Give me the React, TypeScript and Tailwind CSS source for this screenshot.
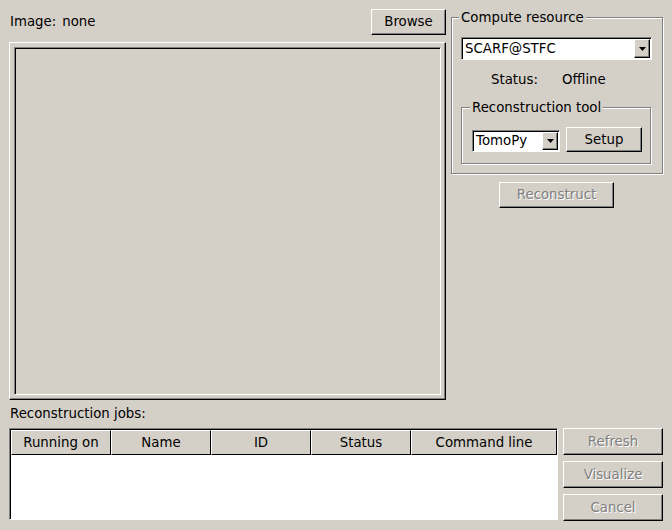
const raised =
  "border border-t-white border-l-white border-r-black border-b-black shadow-[inset_-1px_-1px_0_#808080]";
const sunken =
  "border border-t-[#808080] border-l-[#808080] border-r-white border-b-white shadow-[inset_1px_1px_0_#000]";
const etched = "border border-[#808080] shadow-[inset_1px_1px_0_#fff,1px_1px_0_#fff]";

const Arrow = () => (
  <svg width="7" height="4" viewBox="0 0 7 4">
    <polygon points="0,0 7,0 3.5,4" fill="#000" />
  </svg>
);

const Combo = ({ text, className }: { text: string; className: string }) => (
  <div className={`flex bg-white ${sunken} ${className}`}>
    <span className="flex-1 flex items-center pl-[3px]">{text}</span>
    <div className={`w-[16px] my-[1px] mr-[1px] bg-[#d4d0c8] flex items-center justify-center ${raised}`}>
      <Arrow />
    </div>
  </div>
);

const Button = ({
  label,
  className,
  disabled,
}: {
  label: string;
  className: string;
  disabled?: boolean;
}) => (
  <button
    className={`flex items-center justify-center bg-[#d4d0c8] ${raised} ${className} ${
      disabled ? "text-[#808080] [text-shadow:1px_1px_0_#fff]" : "text-black"
    }`}
  >
    {label}
  </button>
);

const GroupTitle = ({ label, className }: { label: string; className: string }) => (
  <div className={`self-start -mt-[8px] px-[2px] bg-[#d4d0c8] leading-[15px] ${className}`}>{label}</div>
);

export default function App() {
  const columns = [
    { name: "Running on", w: "w-[100px]" },
    { name: "Name", w: "w-[100px]" },
    { name: "ID", w: "w-[100px]" },
    { name: "Status", w: "w-[100px]" },
    { name: "Command line", w: "w-[146px]" },
  ];

  return (
    <div className="w-[672px] h-[530px] bg-[#d4d0c8] text-black font-['DejaVu_Sans',sans-serif] text-[13.33px] leading-[16px] overflow-hidden">
      <div className="flex h-[400px]">
        {/* left: image preview */}
        <div className="ml-[9px] w-[437px] pt-[9px] flex flex-col">
          <div className="flex items-center justify-between h-[26px]">
            <span className="pl-[1px] flex">
              <span>Image:</span>
              <span className="ml-[6px]">none</span>
            </span>
            <Button label="Browse" className="w-[75px] h-[26px]" />
          </div>
          <div className="mt-[7px] h-[358px] p-[4px] border border-t-white border-l-white border-r-black border-b-black shadow-[inset_-1px_-1px_0_#808080]">
            <div className={`h-full ${sunken}`} />
          </div>
        </div>

        {/* right: compute resource */}
        <div className="ml-[5px] w-[212px] pt-[17px] flex flex-col">
          <div className={`h-[157px] flex flex-col pl-[9px] ${etched}`}>
            <GroupTitle label="Compute resource" className="ml-[-2px]" />
            <Combo text="SCARF@STFC" className="mt-[12px] w-[191px] h-[23px]" />
            <div className="mt-[12px] flex h-[16px]">
              <span className="ml-[30px] w-[71px]">Status:</span>
              <span>Offline</span>
            </div>
            <div className={`mt-[19px] w-[190px] h-[57px] flex flex-col pl-[10px] ${etched}`}>
              <GroupTitle label="Reconstruction tool" className="ml-[-2px]" />
              <div className="mt-[12px] flex items-end gap-[6px]">
                <Combo text="TomoPy" className="w-[88px] h-[22px]" />
                <Button label="Setup" className="w-[76px] h-[25px]" />
              </div>
            </div>
          </div>
          <Button label="Reconstruct" disabled className="mt-[8px] ml-[48px] w-[115px] h-[26px]" />
        </div>
      </div>

      {/* jobs */}
      <div className="pl-[10px] mt-[6px]">Reconstruction jobs:</div>
      <div className="flex items-start ml-[9px] mt-[6px]">
        <div className={`w-[549px] h-[92px] pl-[1px] pt-[1px] flex flex-col ${sunken}`}>
          <div className="flex h-[25px]">
            {columns.map((c) => (
              <div
                key={c.name}
                className={`${c.w} flex items-center justify-center border border-t-white border-l-white border-r-black border-b-black`}
              >
                {c.name}
              </div>
            ))}
          </div>
          <div className="flex-1 bg-white" />
        </div>
        <div className="ml-[5px] flex flex-col gap-[6px]">
          <Button label="Refresh" disabled className="w-[100px] h-[27px]" />
          <Button label="Visualize" disabled className="w-[100px] h-[27px]" />
          <Button label="Cancel" disabled className="w-[100px] h-[27px]" />
        </div>
      </div>
    </div>
  );
}
